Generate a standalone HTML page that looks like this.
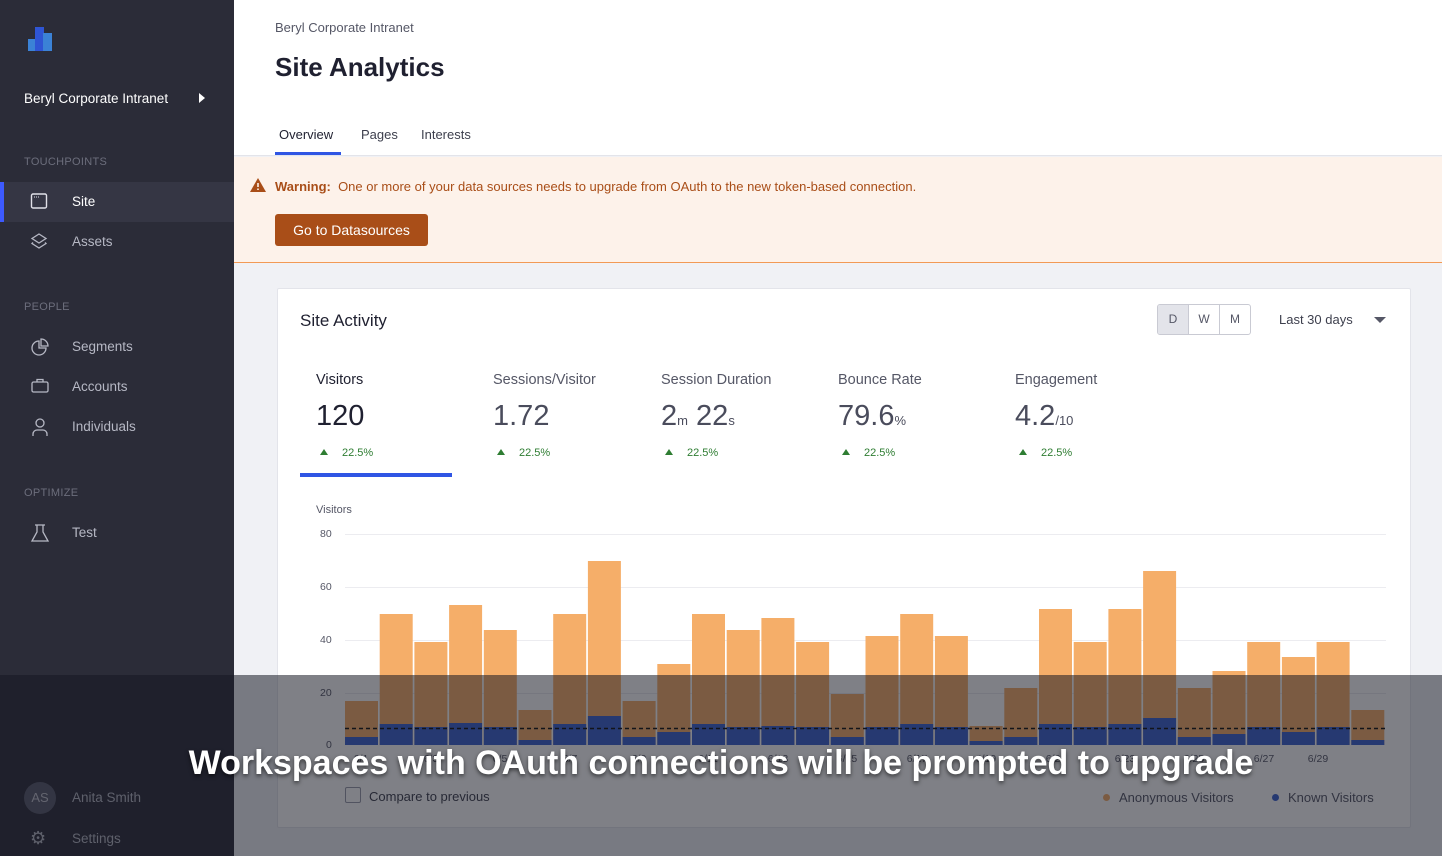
<!DOCTYPE html>
<html><head><meta charset="utf-8"><style>
*{box-sizing:border-box;margin:0;padding:0}
body{width:1442px;height:856px;overflow:hidden;font-family:"Liberation Sans",sans-serif;background:#f0f1f5;position:relative}
.a{position:absolute}
.side{left:0;top:0;width:234px;height:856px;background:#2b2c38;color:#c9cad3}
.sec{font-size:11px;color:#6c6e7c;letter-spacing:.3px;left:24px}
.item{left:0;width:234px;height:40px;font-size:13.5px;color:#b6b8c4}
.item span{position:absolute;left:72px;top:12px}
.item svg{position:absolute;left:30px;top:10px}
.tab{font-size:13px;color:#3d3f4d;top:127px}
.lbl{font-size:14.5px;color:#555766;top:372px}
.val{font-size:29px;color:#4a4c5c;top:400px}
.val small{font-size:13px}
.chg{font-size:11px;color:#2e7d32;top:447px}
.chg b{display:inline-block;width:0;height:0;border-left:4px solid transparent;border-right:4px solid transparent;border-bottom:6px solid #2e7d32;margin-right:14px;vertical-align:1px}
.yl{font-size:10.5px;color:#555766;left:320px}
.xl{font-size:10.5px;color:#555766;top:753px;width:40px;text-align:center}
</style></head><body>
<div class="a side">
  <svg class="a" style="left:28px;top:27px" width="25" height="24" viewBox="0 0 25 24"><rect x="0" y="12" width="8" height="12" fill="#3b82d6"/><rect x="7" y="0" width="9" height="24" fill="#2f55d4"/><rect x="15" y="6" width="9" height="18" fill="#3b82d6"/></svg>
  <div class="a" style="left:24px;top:91px;font-size:13.5px;color:#fff">Beryl Corporate Intranet</div>
  <div class="a" style="left:199px;top:93px;border-top:5px solid transparent;border-bottom:5px solid transparent;border-left:6px solid #fff"></div>
  <div class="a sec" style="top:156px">TOUCHPOINTS</div>
  <div class="a item" style="top:182px;background:#353644"><div class="a" style="left:0;top:0;width:4px;height:40px;background:#3d5afe"></div><svg width="18" height="18" viewBox="0 0 18 18"><rect x="1.5" y="2" width="15" height="14" rx="1.5" fill="none" stroke="#e0e0e8" stroke-width="1.4"/><path d="M4 5h1M6 5h1M8 5h1" stroke="#e0e0e8"/></svg><span style="color:#fff">Site</span></div>
  <div class="a item" style="top:222px"><svg width="18" height="20" viewBox="0 0 18 20"><path d="M9 2L16 6.5 9 11 2 6.5Z M3 10.5L2 11.5 9 16 16 11.5 15 10.5" fill="none" stroke="#b6b8c4" stroke-width="1.3"/></svg><span>Assets</span></div>
  <div class="a sec" style="top:301px">PEOPLE</div>
  <div class="a item" style="top:327px"><svg width="20" height="20" viewBox="0 0 20 20"><path d="M9 4A7 7 0 1 0 16 11H9Z" fill="none" stroke="#b6b8c4" stroke-width="1.3"/><path d="M11 2A7 7 0 0 1 18 9H11Z" fill="none" stroke="#b6b8c4" stroke-width="1.3"/></svg><span>Segments</span></div>
  <div class="a item" style="top:367px"><svg width="20" height="18" viewBox="0 0 20 18"><rect x="2" y="5" width="16" height="10" rx="1.5" fill="none" stroke="#b6b8c4" stroke-width="1.3"/><path d="M7 5V2.5h6V5" fill="none" stroke="#b6b8c4" stroke-width="1.3"/></svg><span>Accounts</span></div>
  <div class="a item" style="top:407px"><svg width="20" height="20" viewBox="0 0 20 20"><circle cx="10" cy="6" r="4" fill="none" stroke="#b6b8c4" stroke-width="1.3"/><path d="M3 19v-2a4 4 0 0 1 4-4h6a4 4 0 0 1 4 4v2" fill="none" stroke="#b6b8c4" stroke-width="1.3"/></svg><span>Individuals</span></div>
  <div class="a sec" style="top:487px">OPTIMIZE</div>
  <div class="a item" style="top:513px"><svg width="20" height="20" viewBox="0 0 20 20"><path d="M5 2h10M7 2v7L2 18h16L13 9V2" fill="none" stroke="#b6b8c4" stroke-width="1.3"/></svg><span>Test</span></div>
  <div class="a" style="left:24px;top:782px;width:32px;height:32px;border-radius:50%;background:#585a6a;color:#c0c2cc;font-size:13px;text-align:center;line-height:32px">AS</div>
  <div class="a" style="left:72px;top:790px;font-size:13.5px;color:#b6b8c4">Anita Smith</div>
  <div class="a" style="left:30px;top:828px;font-size:18px;color:#b6b8c4">⚙</div>
  <div class="a" style="left:72px;top:831px;font-size:13.5px;color:#b6b8c4">Settings</div>
</div>
<div class="a" style="left:234px;top:0;width:1208px;height:156px;background:#fff;border-bottom:1px solid #e3e4ea"></div>
<div class="a" style="left:275px;top:20px;font-size:13px;color:#555766">Beryl Corporate Intranet</div>
<div class="a" style="left:275px;top:52px;font-size:26px;font-weight:bold;color:#1f2030">Site Analytics</div>
<div class="a tab" style="left:279px;color:#1f2030">Overview</div>
<div class="a" style="left:275px;top:152px;width:66px;height:3px;background:#2f55e4"></div>
<div class="a tab" style="left:361px">Pages</div>
<div class="a tab" style="left:421px">Interests</div>
<div class="a" style="left:234px;top:157px;width:1208px;height:106px;background:#fdf2ea;border-bottom:1px solid #f29a55"></div>
<svg class="a" style="left:250px;top:178px" width="16" height="14" viewBox="0 0 16 14"><path d="M8 0L16 14H0Z" fill="#a94e18"/><path d="M8 5v4M8 10.5v1.5" stroke="#fdf2ea" stroke-width="1.6"/></svg>
<div class="a" style="left:275px;top:179px;font-size:13px;color:#a94e18"><b>Warning:</b>&nbsp; One or more of your data sources needs to upgrade from OAuth to the new token-based connection.</div>
<div class="a" style="left:275px;top:214px;width:153px;height:32px;border-radius:3px;background:#a94e18;color:#fff;font-size:14px;text-align:center;line-height:32px">Go to Datasources</div>
<div class="a" style="left:277px;top:288px;width:1134px;height:540px;background:#fff;border:1px solid #e3e4ea;border-radius:2px"></div>
<div class="a" style="left:300px;top:311px;font-size:17px;color:#1f2030">Site Activity</div>
<div class="a" style="left:1157px;top:304px;width:94px;height:31px;border:1px solid #c9cad3;border-radius:3px;display:flex;font-size:12px;color:#555766;overflow:hidden">
<div style="width:31px;background:#e3e4ea;text-align:center;line-height:29px;border-right:1px solid #c9cad3">D</div><div style="width:31px;text-align:center;line-height:29px;border-right:1px solid #c9cad3">W</div><div style="width:30px;text-align:center;line-height:29px">M</div></div>
<div class="a" style="left:1279px;top:312px;font-size:13px;color:#3d3f4d">Last 30 days</div>
<div class="a" style="left:1374px;top:317px;border-left:6px solid transparent;border-right:6px solid transparent;border-top:6px solid #555766"></div>
<div class="a lbl" style="left:316px;color:#1f2030">Visitors</div><div class="a val" style="left:316px;color:#1f2030">120</div><div class="a chg" style="left:320px"><b></b>22.5%</div>
<div class="a lbl" style="left:493px">Sessions/Visitor</div><div class="a val" style="left:493px">1.72</div><div class="a chg" style="left:497px"><b></b>22.5%</div>
<div class="a lbl" style="left:661px">Session Duration</div><div class="a val" style="left:661px">2<small>m</small> 22<small>s</small></div><div class="a chg" style="left:665px"><b></b>22.5%</div>
<div class="a lbl" style="left:838px">Bounce Rate</div><div class="a val" style="left:838px">79.6<small>%</small></div><div class="a chg" style="left:842px"><b></b>22.5%</div>
<div class="a lbl" style="left:1015px">Engagement</div><div class="a val" style="left:1015px">4.2<small>/10</small></div><div class="a chg" style="left:1019px"><b></b>22.5%</div>
<div class="a" style="left:300px;top:473px;width:152px;height:4px;background:#2f55e4"></div>
<div class="a" style="left:316px;top:504px;font-size:11px;color:#555766">Visitors</div>
<div class="a yl" style="top:528px">80</div><div class="a yl" style="top:581px">60</div><div class="a yl" style="top:634px">40</div><div class="a yl" style="top:687px">20</div><div class="a yl" style="top:739px;left:326px">0</div>
<svg class="a" style="left:0;top:0" width="1442" height="856">
<g stroke="#ececf0"><path d="M345 534.5H1386M345 587.5H1386M345 640.5H1386M345 693.5H1386"/></g>
<g fill="#f5ae69">
<rect x="345" y="701" width="33" height="44"/><rect x="379.7" y="614" width="33" height="131"/><rect x="414.4" y="642" width="33" height="103"/><rect x="449.1" y="605" width="33" height="140"/><rect x="483.8" y="630" width="33" height="115"/><rect x="518.5" y="710" width="33" height="35"/><rect x="553.2" y="614" width="33" height="131"/><rect x="587.9" y="561" width="33" height="184"/><rect x="622.6" y="701" width="33" height="44"/><rect x="657.3" y="664" width="33" height="81"/><rect x="692" y="614" width="33" height="131"/><rect x="726.7" y="630" width="33" height="115"/><rect x="761.4" y="618" width="33" height="127"/><rect x="796.1" y="642" width="33" height="103"/><rect x="830.8" y="694" width="33" height="51"/><rect x="865.5" y="636" width="33" height="109"/><rect x="900.2" y="614" width="33" height="131"/><rect x="934.9" y="636" width="33" height="109"/><rect x="969.6" y="726" width="33" height="19"/><rect x="1004.3" y="688" width="33" height="57"/><rect x="1039" y="609" width="33" height="136"/><rect x="1073.7" y="642" width="33" height="103"/><rect x="1108.4" y="609" width="33" height="136"/><rect x="1143.1" y="571" width="33" height="174"/><rect x="1177.8" y="688" width="33" height="57"/><rect x="1212.5" y="671" width="33" height="74"/><rect x="1247.2" y="642" width="33" height="103"/><rect x="1281.9" y="657" width="33" height="88"/><rect x="1316.6" y="642" width="33" height="103"/><rect x="1351.3" y="710" width="33" height="35"/>
</g>
<g fill="#3a63d0">
<rect x="345" y="737" width="33" height="8"/><rect x="379.7" y="724" width="33" height="21"/><rect x="414.4" y="727" width="33" height="18"/><rect x="449.1" y="723" width="33" height="22"/><rect x="483.8" y="727" width="33" height="18"/><rect x="518.5" y="740" width="33" height="5"/><rect x="553.2" y="724" width="33" height="21"/><rect x="587.9" y="716" width="33" height="29"/><rect x="622.6" y="737" width="33" height="8"/><rect x="657.3" y="732" width="33" height="13"/><rect x="692" y="724" width="33" height="21"/><rect x="726.7" y="727" width="33" height="18"/><rect x="761.4" y="726" width="33" height="19"/><rect x="796.1" y="727" width="33" height="18"/><rect x="830.8" y="737" width="33" height="8"/><rect x="865.5" y="727" width="33" height="18"/><rect x="900.2" y="724" width="33" height="21"/><rect x="934.9" y="727" width="33" height="18"/><rect x="969.6" y="741" width="33" height="4"/><rect x="1004.3" y="737" width="33" height="8"/><rect x="1039" y="724" width="33" height="21"/><rect x="1073.7" y="727" width="33" height="18"/><rect x="1108.4" y="724" width="33" height="21"/><rect x="1143.1" y="718" width="33" height="27"/><rect x="1177.8" y="737" width="33" height="8"/><rect x="1212.5" y="734" width="33" height="11"/><rect x="1247.2" y="727" width="33" height="18"/><rect x="1281.9" y="732" width="33" height="13"/><rect x="1316.6" y="727" width="33" height="18"/><rect x="1351.3" y="740" width="33" height="5"/>
</g>
<path d="M345 728.5H1386" stroke="#111" stroke-width="1.5" stroke-dasharray="4 3"/>
</svg>
<div class="a xl" style="left:341px">6/1</div><div class="a xl" style="left:411px">6/3</div><div class="a xl" style="left:480px">6/5</div><div class="a xl" style="left:550px">6/7</div><div class="a xl" style="left:619px">6/9</div><div class="a xl" style="left:688px">6/11</div><div class="a xl" style="left:758px">6/13</div><div class="a xl" style="left:827px">6/15</div><div class="a xl" style="left:897px">6/17</div><div class="a xl" style="left:966px">6/19</div><div class="a xl" style="left:1036px">6/21</div><div class="a xl" style="left:1105px">6/23</div><div class="a xl" style="left:1174px">6/25</div><div class="a xl" style="left:1244px">6/27</div><div class="a xl" style="left:1298px">6/29</div>
<div class="a" style="left:345px;top:787px;width:16px;height:16px;border:1px solid #9a9caa;border-radius:2px"></div>
<div class="a" style="left:369px;top:789px;font-size:13px;color:#3d3f4d">Compare to previous</div>
<div class="a" style="left:1103px;top:794px;width:7px;height:7px;border-radius:50%;background:#f5ae69"></div>
<div class="a" style="left:1119px;top:790px;font-size:13px;color:#555766">Anonymous Visitors</div>
<div class="a" style="left:1272px;top:794px;width:7px;height:7px;border-radius:50%;background:#3a63d0"></div>
<div class="a" style="left:1288px;top:790px;font-size:13px;color:#555766">Known Visitors</div>
<div class="a" style="left:0;top:675px;width:1442px;height:181px;background:rgba(22,24,34,0.55)"></div>
<div class="a" style="left:0;top:744px;width:1442px;text-align:center;font-size:34px;font-weight:bold;color:#fff;text-shadow:0 2px 4px rgba(0,0,0,.6)">Workspaces with OAuth connections will be prompted to upgrade</div>
</body></html>
